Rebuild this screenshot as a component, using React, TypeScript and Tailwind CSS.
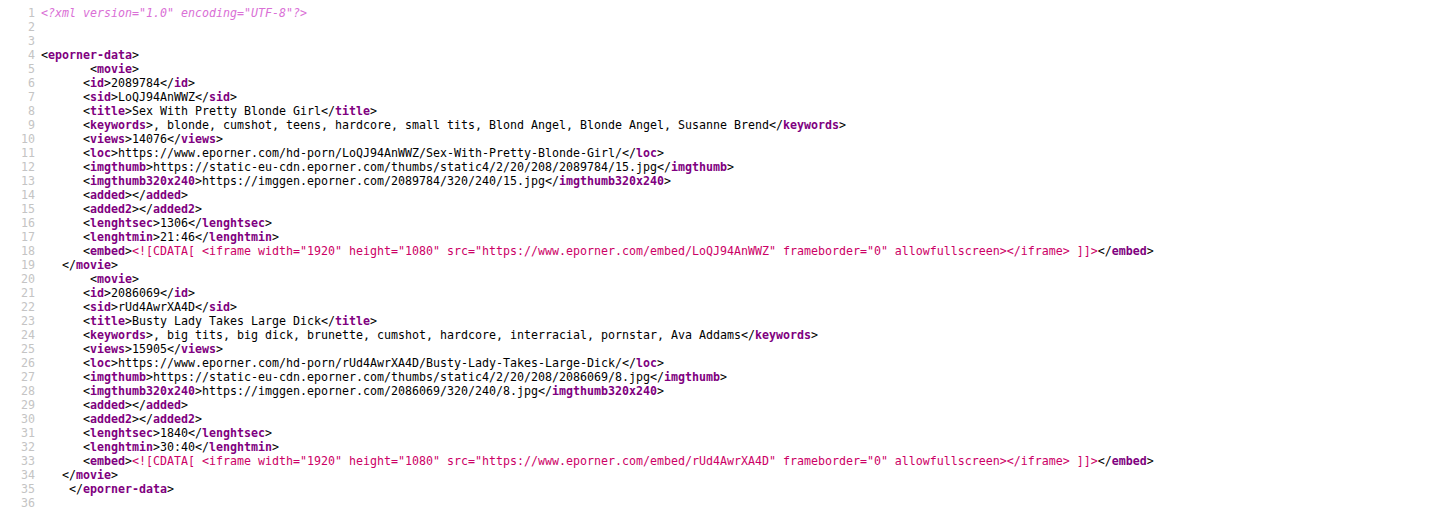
type Tok = string | { o: string } | { c: string } | { cd: string } | { pi: string };

const o = (n: string): Tok => ({ o: n });
const c = (n: string): Tok => ({ c: n });
const el = (n: string, body = ''): Tok[] => [o(n), body, c(n)];

const embed = (sid: string): Tok[] => [
  o('embed'),
  {
    cd: `<![CDATA[ <iframe width="1920" height="1080" src="https://www.eporner.com/embed/${sid}" frameborder="0" allowfullscreen></iframe> ]]>`,
  },
  c('embed'),
];

const movie = (m: {
  id: string;
  sid: string;
  title: string;
  keywords: string;
  views: string;
  slug: string;
  thumb: string;
  sec: string;
  min: string;
}): Tok[][] => [
  ['       ', o('movie')],
  ['      ', ...el('id', m.id)],
  ['      ', ...el('sid', m.sid)],
  ['      ', ...el('title', m.title)],
  ['      ', ...el('keywords', m.keywords)],
  ['      ', ...el('views', m.views)],
  ['      ', ...el('loc', `https://www.eporner.com/hd-porn/${m.sid}/${m.slug}/`)],
  ['      ', ...el('imgthumb', `https://static-eu-cdn.eporner.com/thumbs/static4/2/20/208/${m.id}/${m.thumb}.jpg`)],
  ['      ', ...el('imgthumb320x240', `https://imggen.eporner.com/${m.id}/320/240/${m.thumb}.jpg`)],
  ['      ', ...el('added')],
  ['      ', ...el('added2')],
  ['      ', ...el('lenghtsec', m.sec)],
  ['      ', ...el('lenghtmin', m.min)],
  ['      ', ...embed(m.sid)],
  ['   ', c('movie')],
];

const lines: Tok[][] = [
  [{ pi: '<?xml version="1.0" encoding="UTF-8"?>' }],
  [],
  [],
  [o('eporner-data')],
  ...movie({
    id: '2089784',
    sid: 'LoQJ94AnWWZ',
    title: 'Sex With Pretty Blonde Girl',
    keywords: ', blonde, cumshot, teens, hardcore, small tits, Blond Angel, Blonde Angel, Susanne Brend',
    views: '14076',
    slug: 'Sex-With-Pretty-Blonde-Girl',
    thumb: '15',
    sec: '1306',
    min: '21:46',
  }),
  ...movie({
    id: '2086069',
    sid: 'rUd4AwrXA4D',
    title: 'Busty Lady Takes Large Dick',
    keywords: ', big tits, big dick, brunette, cumshot, hardcore, interracial, pornstar, Ava Addams',
    views: '15905',
    slug: 'Busty-Lady-Takes-Large-Dick',
    thumb: '8',
    sec: '1840',
    min: '30:40',
  }),
  ['    ', c('eporner-data')],
  [],
];

function Token({ t }: { t: Tok }) {
  if (typeof t === 'string') return <span>{t}</span>;
  if ('pi' in t) return <span className="italic text-[#da70d6]">{t.pi}</span>;
  if ('cd' in t) return <span className="text-[#cc0066]">{t.cd}</span>;
  if ('o' in t)
    return (
      <span>
        &lt;<span className="font-bold text-[#800080]">{t.o}</span>&gt;
      </span>
    );
  return (
    <span>
      &lt;/<span className="font-bold text-[#800080]">{t.c}</span>&gt;
    </span>
  );
}

export default function App() {
  return (
    <div className="min-h-screen w-full bg-white pt-[6px] font-['DejaVu_Sans_Mono',monospace] text-[11.63px] leading-[14px] text-black">
      {lines.map((line, i) => (
        <div key={i} className="flex h-[14px]">
          <span className="w-[35px] shrink-0 text-right text-[#c4c4c4]">{i + 1}</span>
          <span className="ml-[6px] whitespace-pre">
            {line.map((t, j) => (
              <Token key={j} t={t} />
            ))}
          </span>
        </div>
      ))}
    </div>
  );
}
